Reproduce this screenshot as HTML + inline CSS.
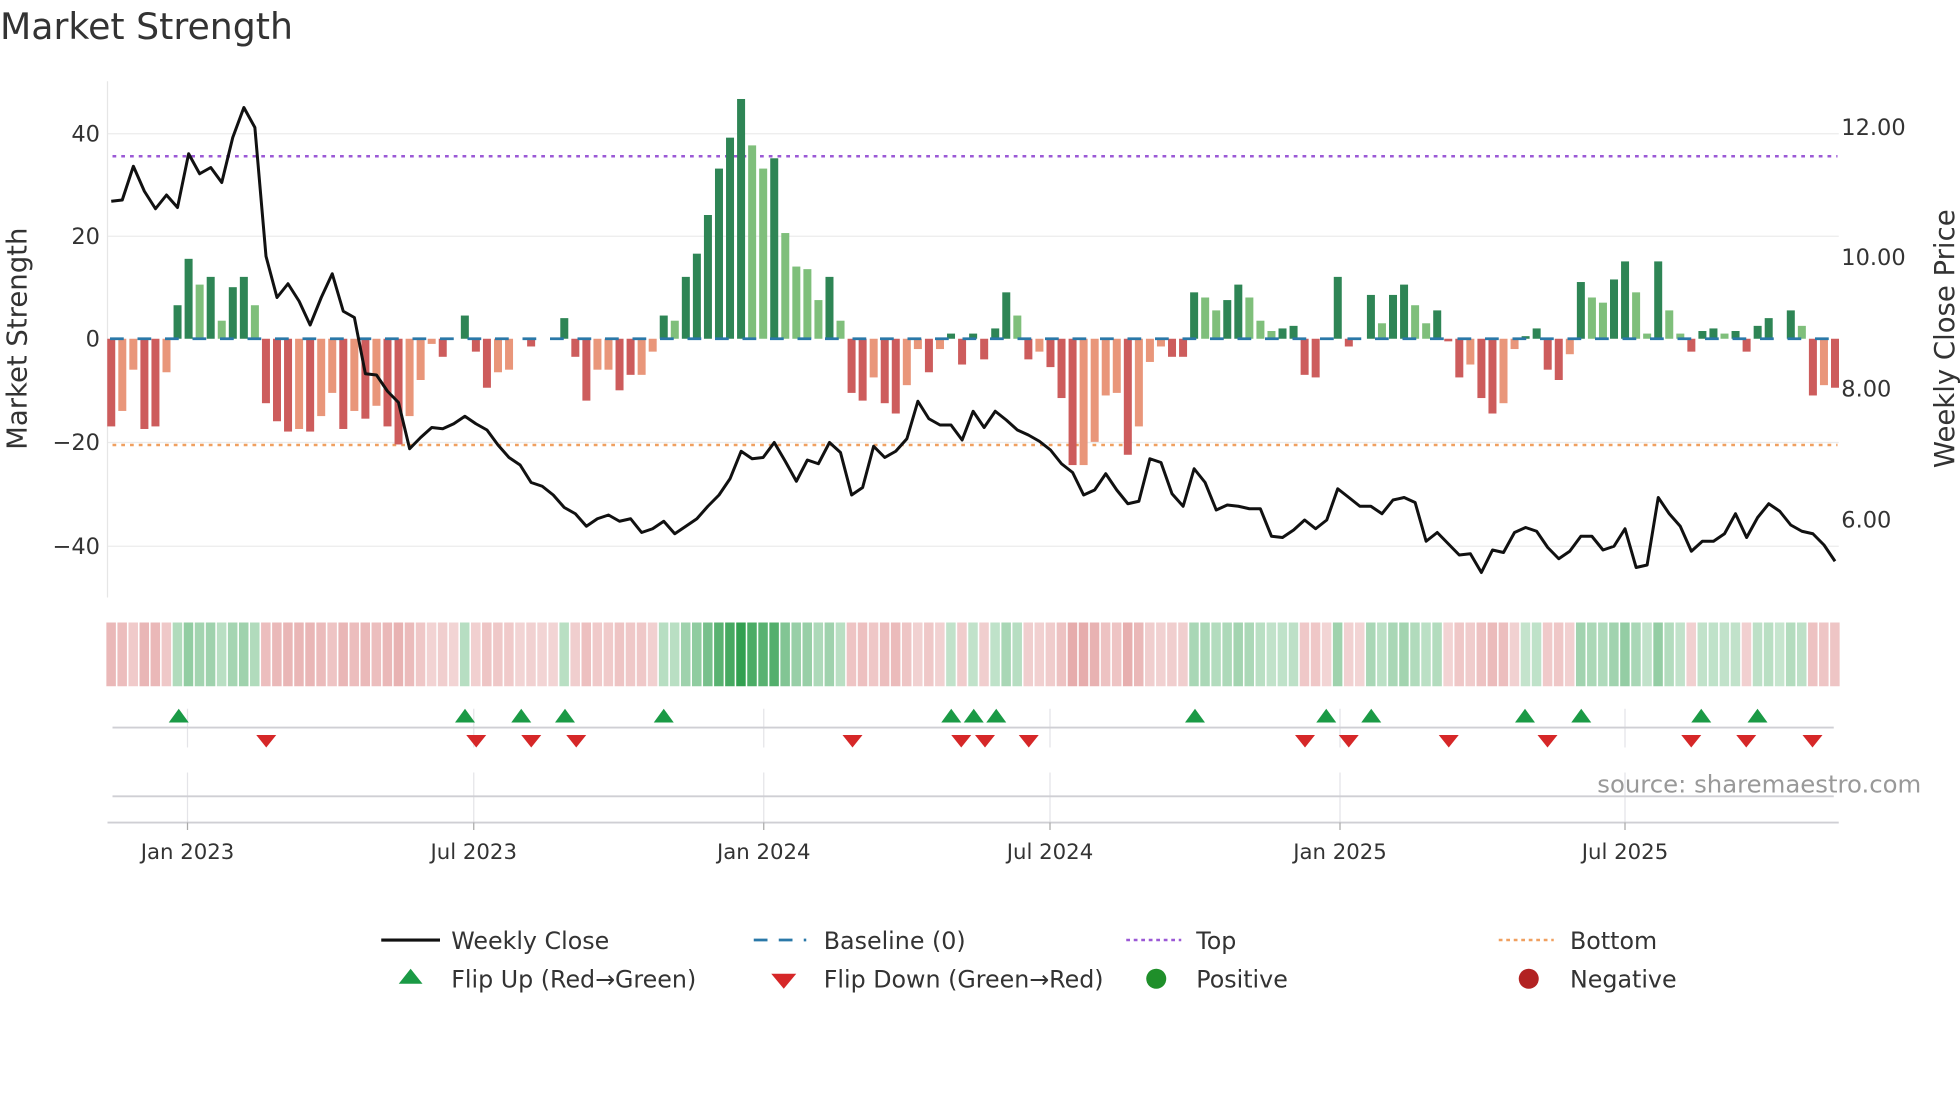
<!DOCTYPE html>
<html><head><meta charset="utf-8"><style>
html,body{margin:0;padding:0;background:#fff;}
svg{display:block;font-family:"DejaVu Sans","Liberation Sans",sans-serif;}
</style></head><body>
<svg id="s" width="1960" height="1102" viewBox="0 0 1568 881.6" xmlns="http://www.w3.org/2000/svg">
<rect width="1568" height="881.6" fill="#fff"/>
<text x="0" y="31" font-size="29" fill="#333">Market Strength</text>
<g stroke="#ebebeb" stroke-width="1">
<line x1="86" y1="107" x2="1471" y2="107"/>
<line x1="86" y1="189" x2="1471" y2="189"/>
<line x1="86" y1="354" x2="1471" y2="354"/>
<line x1="86" y1="437" x2="1471" y2="437"/>
</g>
<line x1="86" y1="65" x2="86" y2="478" stroke="#e6e6e6"/>
<g font-size="18" fill="#333" text-anchor="end">
<text x="80" y="113">40</text><text x="80" y="195">20</text><text x="80" y="277">0</text>
<text x="80" y="360">−20</text><text x="80" y="443">−40</text>
</g>
<g font-size="18" fill="#333">
<text x="1473" y="108">12.00</text><text x="1473" y="212">10.00</text>
<text x="1473" y="317">8.00</text><text x="1473" y="422">6.00</text>
</g>
<text transform="translate(21,271) rotate(-90)" font-size="22" fill="#333" text-anchor="middle">Market Strength</text>
<text transform="translate(1563,271) rotate(-90)" font-size="22" fill="#333" text-anchor="middle">Weekly Close Price</text>
<line x1="90" y1="125" x2="1470" y2="125" stroke="#9b59d6" stroke-width="2" stroke-dasharray="3,4"/>
<line x1="90" y1="356" x2="1470" y2="356" stroke="#f0a060" stroke-width="2" stroke-dasharray="3,4"/>
<g id="bars"></g>
<line x1="88" y1="271" x2="1470" y2="271" stroke="#2a78a8" stroke-width="2.2" stroke-dasharray="11,11"/>
<polyline id="price" fill="none" stroke="#111" stroke-width="2.4" stroke-linejoin="round"/>
<g id="heat"></g>
<g stroke="#e4e4e8" stroke-width="1">
<line x1="150" y1="567" x2="150" y2="598"/><line x1="379" y1="567" x2="379" y2="598"/><line x1="611" y1="567" x2="611" y2="598"/><line x1="840" y1="567" x2="840" y2="598"/><line x1="1072" y1="567" x2="1072" y2="598"/><line x1="1300" y1="567" x2="1300" y2="598"/>
<line x1="150" y1="618" x2="150" y2="658"/><line x1="379" y1="618" x2="379" y2="658"/><line x1="611" y1="618" x2="611" y2="658"/><line x1="840" y1="618" x2="840" y2="658"/><line x1="1072" y1="618" x2="1072" y2="658"/><line x1="1300" y1="618" x2="1300" y2="658"/>
</g>
<line x1="90" y1="582" x2="1467" y2="582" stroke="#cfcfd4" stroke-width="1.5"/>
<line x1="90" y1="637" x2="1467" y2="637" stroke="#cfcfd4" stroke-width="1.5"/>
<line x1="86" y1="658" x2="1471" y2="658" stroke="#cfcfd4" stroke-width="1.5"/>
<g stroke="#aaa" stroke-width="1">
<line x1="150" y1="658" x2="150" y2="664"/><line x1="379" y1="658" x2="379" y2="664"/><line x1="611" y1="658" x2="611" y2="664"/><line x1="840" y1="658" x2="840" y2="664"/><line x1="1072" y1="658" x2="1072" y2="664"/><line x1="1300" y1="658" x2="1300" y2="664"/>
</g>
<g id="tri"></g>
<text x="1537" y="634" font-size="19.5" fill="#999" text-anchor="end">source: sharemaestro.com</text>
<g font-size="17" fill="#333" text-anchor="middle">
<text x="150" y="687">Jan 2023</text><text x="379" y="687">Jul 2023</text><text x="611" y="687">Jan 2024</text>
<text x="840" y="687">Jul 2024</text><text x="1072" y="687">Jan 2025</text><text x="1300" y="687">Jul 2025</text>
</g>
<line x1="305" y1="752" x2="352" y2="752" stroke="#111" stroke-width="2.5"/>
<line x1="603" y1="752" x2="645" y2="752" stroke="#2a78a8" stroke-width="2.2" stroke-dasharray="11,9"/>
<line x1="901" y1="752" x2="945" y2="752" stroke="#9b59d6" stroke-width="2" stroke-dasharray="3,3"/>
<line x1="1199" y1="752" x2="1243" y2="752" stroke="#f0a060" stroke-width="2" stroke-dasharray="3,3"/>
<polygon points="319,787 338,787 328.5,775" fill="#1a9a45"/>
<polygon points="617,779 637,779 627,791" fill="#d62728"/>
<circle cx="925" cy="783" r="8" fill="#1f8f2a"/>
<circle cx="1223" cy="783" r="8" fill="#b22222"/>
<g font-size="19" fill="#333">
<text x="361" y="759">Weekly Close</text><text x="659" y="759">Baseline (0)</text>
<text x="957" y="759">Top</text><text x="1256" y="759">Bottom</text>
<text x="361" y="790">Flip Up (Red→Green)</text><text x="659" y="790">Flip Down (Green→Red)</text>
<text x="957" y="790">Positive</text><text x="1256" y="790">Negative</text>
</g>
</svg>
<script>
var V=[-17,-14,-6,-17.5,-17,-6.5,6.5,15.5,10.5,12,3.5,10,12,6.5,-12.5,-16,-18,-17.5,-18,-15,-10.5,-17.5,-14,-15.5,-13,-17,-20.5,-15,-8,-1,-3.5,0,4.5,-2.5,-9.5,-6.5,-6,0,-1.5,0,0,4,-3.5,-12,-6,-6,-10,-7,-7,-2.5,4.5,3.5,12,16.5,24,33,39,46.5,37.5,33,35,20.5,14,13.5,7.5,12,3.5,-10.5,-12,-7.5,-12.5,-14.5,-9,-2,-6.5,-2,1,-5,1,-4,2,9,4.5,-4,-2.5,-5.5,-11.5,-24.5,-24.5,-20,-11,-10.5,-22.5,-17,-4.5,-1.5,-3.5,-3.5,9,8,5.5,7.5,10.5,8,3.5,1.5,2,2.5,-7,-7.5,0,12,-1.5,0,8.5,3,8.5,10.5,6.5,3,5.5,-0.5,-7.5,-5,-11.5,-14.5,-12.5,-2,0.5,2,-6,-8,-3,11,8,7,11.5,15,9,1,15,5.5,1,-2.5,1.5,2,1,1.5,-2.5,2.5,4,0,5.5,2.5,-11,-9,-9.5];
var P=[161,160,133,153,167,156,166,123,139,134,146,110,86,102,205,238,227,241,260,238,219,249,254,299,300,313,322,359,350,342,343,339,333,339,344,356,366,372,386,389,396,406,411,421,415,412,417,415,426,423,417,427,421,415,405,396,383,361,367,366,354,369,385,368,371,354,362,396,390,357,366,361,351,321,335,340,340,352,329,342,329,336,344,348,353,360,371,378,396,392,379,392,403,401,367,370,395,405,375,386,408,404,405,407,407,429,430,424,416,423,416,391,398,405,405,411,400,398,402,433,426,435,444,443,458,440,442,426,422,425,438,447,441,429,429,440,437,423,454,452,398,411,421,441,433,433,427,411,430,414,403,409,420,425,427,436,449];
var ns="http://www.w3.org/2000/svg",dx=(1468-89)/156;
function el(t,a,p){var e=document.createElementNS(ns,t);for(var k in a)e.setAttribute(k,a[k]);p.appendChild(e);return e;}
var bars=document.getElementById('bars'),heat=document.getElementById('heat'),tri=document.getElementById('tri');
var LI=[1,2,5,8,10,13,17,19,20,22,24,27,28,29,35,36,44,45,48,49,51,58,59,61,62,63,64,66,69,72,73,75,82,84,88,89,90,91,93,94,95,99,100,103,104,105,115,118,119,123,126,127,132,134,135,138,139,141,142,146,153,155];
var prev=-1,pts=[];
for(var i=0;i<V.length;i++){
 var v=V[i],x=89+dx*i,h=Math.abs(v)*4.125;
 var light=LI.indexOf(i)>=0;
 var c=v>=0?(light?'#7fbf7b':'#2e8555'):(light?'#e9967a':'#cd5c5c');
 if(h>0.5)el('rect',{x:x-3.2,y:v>=0?271-h:271,width:6.4,height:h,fill:c},bars);
 var s=v>0?1:(v<0?-1:prev);prev=s;
 var a=Math.min(Math.abs(v),45)/45;
 var fill=s>0?'rgb(50,160,80)':'rgb(205,85,85)';
 var op=s>0?(0.28+a*0.72):(0.25+a*0.45);
 el('rect',{x:x-3.9,y:498,width:7.6,height:51,fill:fill,'fill-opacity':op.toFixed(2)},heat);
 pts.push(x.toFixed(1)+','+P[i]);
}
document.getElementById('price').setAttribute('points',pts.join(' '));
[143,372,417,452,531,761,779,797,956,1061,1097,1220,1265,1361,1406].forEach(function(x){el('polygon',{points:(x-8)+',578 '+(x+8)+',578 '+x+',567',fill:'#1a9a45'},tri);});
[213,381,425,461,682,769,788,823,1044,1079,1159,1238,1353,1397,1450].forEach(function(x){el('polygon',{points:(x-8)+',588 '+(x+8)+',588 '+x+',598',fill:'#d62728'},tri);});
</script>
</body></html>
